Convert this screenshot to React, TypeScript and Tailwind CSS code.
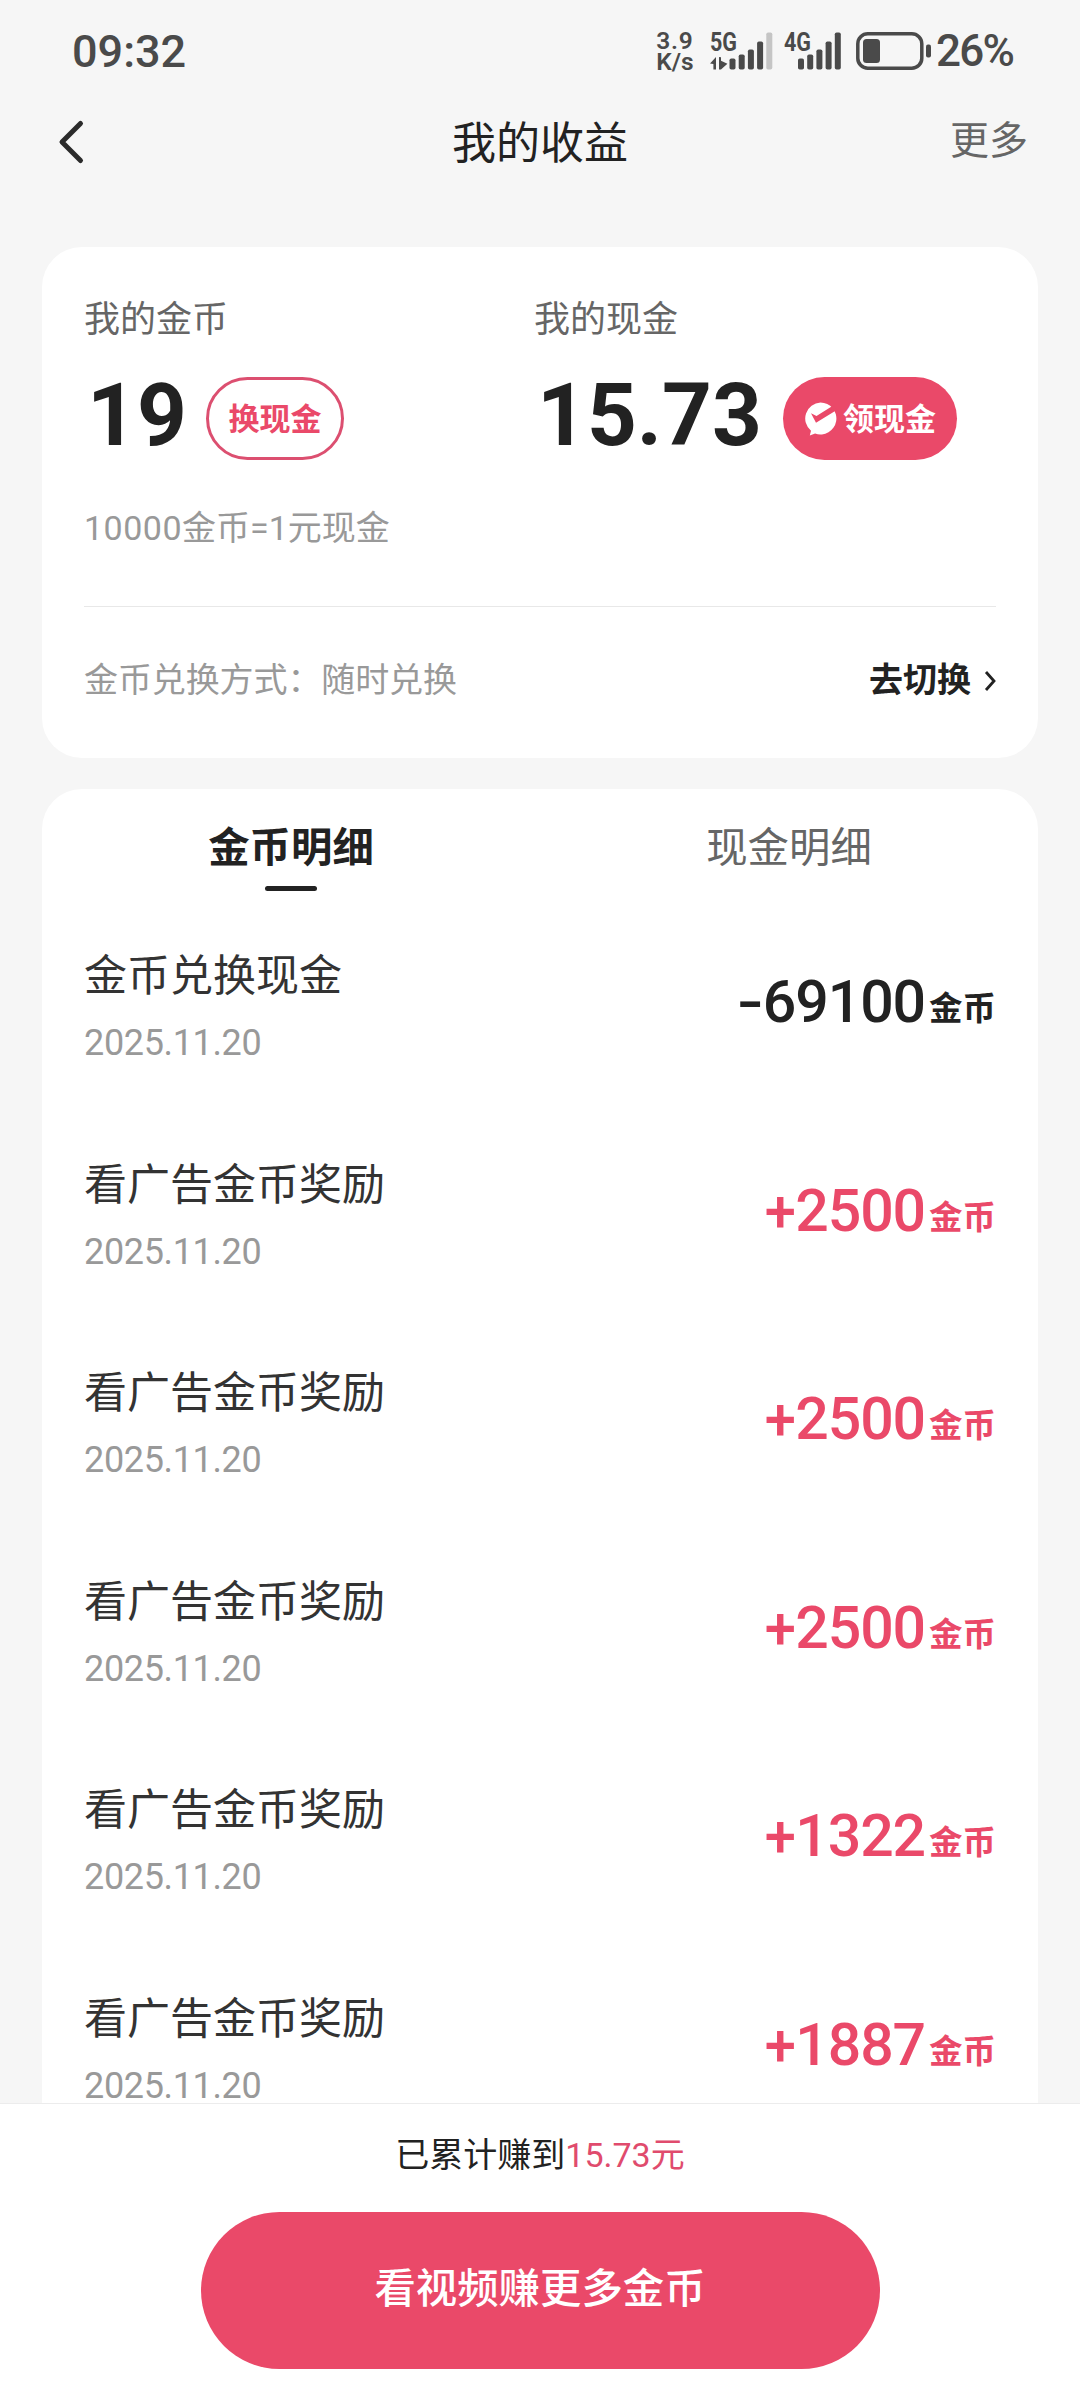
import { ReactNode } from 'react';
import clsx from 'clsx';

interface CoinRecord {
  id: number;
  title: string;
  date: string;
  amount: string;
}

const records: CoinRecord[] = [
  { id: 1, title: '金币兑换现金', date: '2025.11.20', amount: '-69100' },
  { id: 2, title: '看广告金币奖励', date: '2025.11.20', amount: '+2500' },
  { id: 3, title: '看广告金币奖励', date: '2025.11.20', amount: '+2500' },
  { id: 4, title: '看广告金币奖励', date: '2025.11.20', amount: '+2500' },
  { id: 5, title: '看广告金币奖励', date: '2025.11.20', amount: '+1322' },
  { id: 6, title: '看广告金币奖励', date: '2025.11.20', amount: '+1887' },
];

const Num = ({ className, children }: { className?: string; children: ReactNode }) => (
  <span className={clsx("font-['Roboto','Liberation_Sans',sans-serif]", className)}>{children}</span>
);

const SIGNAL_BARS = [11, 15, 20, 28, 37];

const Signal = ({ label, weak }: { label: string; weak?: boolean }) => (
  <svg className="overflow-visible" width="63" height="38" viewBox="0 0 63 38" fill="#4a4a4a">
    <text
      x="0"
      y="18.5"
      fontFamily="Roboto, sans-serif"
      fontWeight="700"
      fontSize="25"
      textLength="27"
      lengthAdjust="spacingAndGlyphs"
    >
      {label}
    </text>
    {weak && (
      <path d="M0 31.5 6 25v12.5H3.4V32zM9 25l2 .2v3.6l6.4 3-6.4 5.7H9z" />
    )}
    {SIGNAL_BARS.map((h, i) => (
      <rect
        key={h}
        x={(weak ? 19.5 : 14) + i * 9.2}
        y={37.5 - h}
        width="6"
        height={h}
        rx="1.8"
        fill={weak && i === 4 ? '#c5c5c5' : '#4a4a4a'}
      />
    ))}
  </svg>
);

const Battery = () => (
  <svg width="76" height="38" viewBox="0 0 76 38" fill="none">
    <rect x="1.8" y="1.8" width="64" height="34.4" rx="10" stroke="#4a4a4a" strokeWidth="3.5" />
    <rect x="7" y="7" width="17" height="24" rx="3.5" fill="#4a4a4a" />
    <rect x="70" y="12.5" width="5" height="13" rx="2" fill="#4a4a4a" />
  </svg>
);

const StatusBar = () => (
  <div className="h-[100px] pt-[2px] pl-[72px] pr-[66px] flex items-center justify-between text-[#4a4a4a]">
    <Num className="text-[45px] leading-none font-medium">09:32</Num>
    <div className="flex items-center">
      <Num className="w-[42px] mr-[14px] flex flex-col text-center text-[24.5px] leading-[21px] font-semibold">
        <span className="tracking-[0.8px]">3.9</span>
        <span>K/s</span>
      </Num>
      <Signal label="5G" weak />
      <div className="w-[11px]" />
      <Signal label="4G" />
      <div className="w-[9px]" />
      <Battery />
      <Num className="ml-[4px] w-[78px] text-[44px] leading-none font-medium tracking-[-1.8px] whitespace-nowrap">26%</Num>
    </div>
  </div>
);

const NavBar = () => (
  <div className="h-[84px] px-[56px] grid grid-cols-3 items-center">
    <svg width="30" height="46" viewBox="0 0 30 46" fill="none">
      <path d="M24.5 4.5 6 23l18.5 18.5" stroke="#2b2b2b" strokeWidth="5" strokeLinecap="round" strokeLinejoin="round" />
    </svg>
    <div className="pb-[4px] text-center text-[44px] leading-[60px] text-[#222] whitespace-nowrap">我的收益</div>
    <div className="text-right text-[39px] leading-[60px] pb-[10px] mr-[-4px] text-[#666]">更多</div>
  </div>
);

const WithdrawIcon = () => (
  <svg width="34" height="34" viewBox="0 0 34 34">
    <path d="M16.5.5a16 16 0 1 1-5.4 31.1L5.8 33.5 7 28.8A16 16 0 0 1 16.5.5z" fill="#fff" />
    <path d="M7 11.3l5.5 2.7L29.2 3.6l4 4.2L12 20.8z" fill="#ea4969" />
  </svg>
);

const BalanceCard = () => (
  <div className="h-[511px] mx-[42px] px-[42px] rounded-[40px] bg-white">
    <div className="grid grid-cols-[450px_1fr] pt-[44px]">
      <div>
        <div className="text-[36px] leading-[50px] text-[#666]">我的金币</div>
        <div className="mt-[36px] h-[83px] flex items-center">
          <Num className="w-[122px] pl-[3px] pb-[6px] text-[87px] leading-none font-bold text-[#222]">19</Num>
          <button className="w-[138px] h-[83px] pb-[4px] border-[3px] border-[#dc4f70] rounded-full text-[31px] leading-none font-bold text-[#ea4969]">
            换现金
          </button>
        </div>
      </div>
      <div>
        <div className="text-[36px] leading-[50px] text-[#666]">我的现金</div>
        <div className="mt-[36px] h-[83px] flex items-center">
          <Num className="w-[249px] pl-[3px] pb-[6px] text-[87px] leading-none font-bold text-[#222]">15.73</Num>
          <button className="w-[174px] h-[83px] flex items-center justify-center gap-[5px] bg-[#ea4969] rounded-full text-[31px] leading-none font-bold text-white">
            <WithdrawIcon />
            <span className="pb-[5px]">领现金</span>
          </button>
        </div>
      </div>
    </div>
    <div className="mt-[41px] text-[34px] leading-[50px] text-[#999]">
      <Num className="tracking-[0.5px]">10000</Num>金币<Num>=1</Num>元现金
    </div>
    <div className="mt-[53px] h-px bg-[#e8e8e8]" />
    <div className="mt-[46px] flex items-center justify-between text-[34px] leading-[50px]">
      <span className="text-[#999] tracking-[-0.1px]">金币兑换方式：随时兑换</span>
      <span className="flex items-center text-[#222] font-bold">
        去切换
        <svg className="ml-[12px] mt-[6px]" width="13" height="22" viewBox="0 0 13 22" fill="none">
          <path d="M3 2 11 11l-8 9" stroke="#222" strokeWidth="2.8" />
        </svg>
      </span>
    </div>
  </div>
);

const RecordRow = ({ title, date, amount }: CoinRecord) => {
  const income = amount.startsWith('+');

  return (
    <div className="h-[208.6px] shrink-0 pt-[39px] px-[42px] flex justify-between">
      <div>
        <div className="text-[43px] leading-[60px] text-[#333]">{title}</div>
        <Num className="block mt-[21px] text-[36px] leading-[40px] text-[#999] tracking-[-0.35px]">{date}</Num>
      </div>
      <div className={clsx('mt-[20px] h-[80px] flex items-baseline font-medium', income ? 'text-[#ea4969]' : 'text-[#222]')}>
        <Num className="text-[59px] leading-[80px] tracking-[-1.1px]">
          <span className={clsx('inline-block', income ? 'translate-y-[1px] scale-x-95' : 'mr-[4px] scale-x-130')}>
            {amount[0]}
          </span>
          {amount.slice(1)}
        </Num>
        <span className="relative top-[-2px] ml-[4px] text-[33.5px] font-bold">金币</span>
      </div>
    </div>
  );
};

const RecordList = () => (
  <div className="flex-1 min-h-0 mt-[31px] mx-[42px] rounded-t-[40px] bg-white overflow-hidden flex flex-col">
    <div className="h-[114px] shrink-0 grid grid-cols-2 text-center text-[41.4px] leading-[60px]">
      <div className="pt-[25px] flex flex-col items-center font-bold text-[#222]">
        金币明细
        <div className="mt-[12px] w-[52px] h-[5px] rounded-full bg-[#222]" />
      </div>
      <div className="pt-[25px] text-[#666]">现金明细</div>
    </div>
    {records.map((record) => (
      <RecordRow key={record.id} {...record} />
    ))}
  </div>
);

const Footer = () => (
  <div className="h-[297px] shrink-0 border-t border-[#ececec] bg-white flex flex-col items-center">
    <div className="mt-[24px] text-[34px] leading-[50px] text-[#222]">
      已累计赚到
      <span className="text-[#e04b6d]">
        <Num>15.73</Num>元
      </span>
    </div>
    <button className="mt-[32px] pb-[10px] w-[679px] h-[157px] rounded-full bg-[#ea4969] text-white text-[41.4px] leading-none font-medium">
      看视频赚更多金币
    </button>
  </div>
);

export default function App() {
  return (
    <div className="w-[1080px] h-[2400px] flex flex-col overflow-hidden bg-[#f6f6f6] font-['Noto_Sans_CJK_SC',sans-serif]">
      <StatusBar />
      <NavBar />
      <div className="h-[63px] shrink-0" />
      <BalanceCard />
      <RecordList />
      <Footer />
    </div>
  );
}
